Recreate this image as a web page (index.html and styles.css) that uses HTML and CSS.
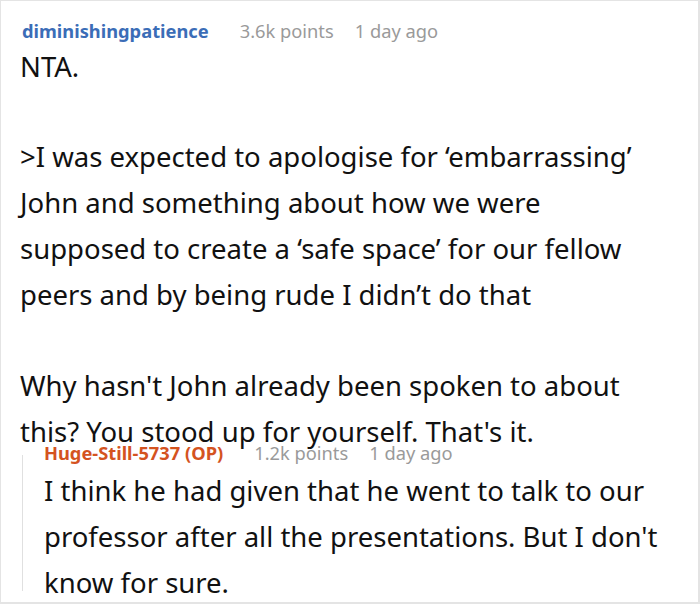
FILE: index.html
```html
<!DOCTYPE html>
<html>
<head>
<meta charset="utf-8">
<link rel="stylesheet" href="styles.css">
</head>
<body>
<div class="card">
  <div class="comment">
    <div class="meta">
      <span class="author">diminishingpatience</span>
      <span class="points">3.6k points</span>
      <span class="time">1 day ago</span>
    </div>
    <div class="body">
      <p class="p-short">NTA.</p>
      <p class="p-quote">&gt;I was expected to apologise for ‘embarrassing’<br>John and something about how we were<br>supposed to create a ‘safe space’ for our fellow<br>peers and by being rude I didn’t do that</p>
      <p>Why hasn't John already been spoken to about this? You stood up for yourself. That's it.</p>
    </div>
    <div class="reply">
      <div class="rail"></div>
      <div class="reply-content">
        <div class="meta">
          <span class="author op">Huge-Still-5737 (OP)</span>
          <span class="points">1.2k points</span>
          <span class="time">1 day ago</span>
        </div>
        <div class="body">
          <p>I think he had given that he went to talk to our professor after all the presentations. But I don't know for sure.</p>
        </div>
      </div>
    </div>
  </div>
</div>
</body>
</html>
```

FILE: styles.css
```css
html, body {
  margin: 0;
  padding: 0;
  background: #ffffff;
}

.card {
  box-sizing: border-box;
  width: 700px;
  height: 604px;
  border: 1px solid #e4e4e4;
  border-right-width: 2px;
  border-bottom-width: 2px;
  padding: 18px 24px 0 19px;
  overflow: hidden;
  font-family: "Noto Sans", "Open Sans", sans-serif;
  color: #111111;
}

.meta {
  display: flex;
  align-items: baseline;
  font-size: 18.3px;
  line-height: 24px;
  padding-left: 2px;
}

.author {
  font-weight: 700;
  color: #3b6db7;
  margin-right: 31px;
}

.author.op {
  color: #d4531f;
}

.points, .time {
  color: #9a9a9a;
}

.points {
  margin-right: 21px;
}

.body {
  font-size: 27.5px;
  line-height: 46px;
  margin-top: 1px;
}

.body p {
  margin: 0 0 45px 0;
}

.body p.p-short {
  margin-bottom: 44px;
}

.body p:last-child {
  margin-bottom: 0;
}

.reply {
  display: flex;
  align-items: flex-start;
  gap: 21px;
  margin-top: -10px;
  margin-left: 2px;
}

.rail {
  flex: 0 0 1px;
  height: 136px;
  margin-top: 10px;
  background: #e0e0e0;
}

.reply-content {
  flex: 1;
  min-width: 0;
}

.reply .meta {
  padding-left: 0;
  line-height: 16px;
}

.reply .body {
  margin-top: 7px;
}
```
